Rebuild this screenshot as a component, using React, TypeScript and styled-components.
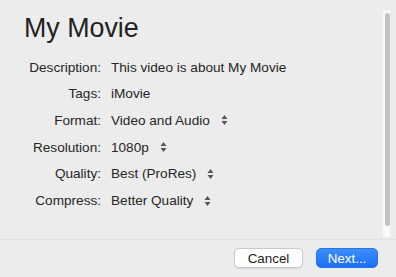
import React from "react";
import styled, { createGlobalStyle } from "styled-components";

const Global = createGlobalStyle`
  html, body { margin: 0; padding: 0; background: #ececec; }
  body { font-family: "Liberation Sans", Arial, sans-serif; -webkit-font-smoothing: antialiased; }
`;

const Window = styled.div`
  width: 396px;
  height: 277px;
  display: flex;
  flex-direction: column;
  background: #ececec;
  overflow: hidden;
`;

const Main = styled.div`
  flex: 1;
  display: flex;
  flex-direction: row;
  min-height: 0;
`;

const Content = styled.div`
  flex: 1;
  padding: 12px 0 0 24px;
`;

const Title = styled.h1`
  margin: 0 0 11px 0;
  font-size: 26.8px;
  line-height: 32px;
  font-weight: 400;
  color: #222;
`;

const Form = styled.div`
  display: grid;
  grid-template-columns: 77px auto;
  column-gap: 10px;
  font-size: 13.6px;
  color: #262626;
`;

const Label = styled.div<{ $h: number }>`
  height: ${(p) => p.$h}px;
  display: flex;
  align-items: center;
  justify-content: flex-end;
  white-space: nowrap;
`;

const Value = styled.div<{ $h: number }>`
  height: ${(p) => p.$h}px;
  display: flex;
  align-items: center;
  gap: 11px;
  white-space: nowrap;
`;

const Track = styled.div`
  width: 8px;
  margin: 10px 6px 2px 0;
  background: #f9f9f9;
  border-left: 1px solid #ededed;
  padding: 3px 0 11px 2px;
  box-sizing: border-box;
  display: flex;
`;

const Thumb = styled.div`
  flex: 1;
  background: #c2c2c2;
  border-radius: 3px;
`;

const Separator = styled.div`
  height: 1px;
  background: #e2e2e2;
`;

const Footer = styled.div`
  height: 37px;
  display: flex;
  justify-content: flex-end;
  align-items: flex-start;
  gap: 13px;
  padding: 8px 18px 0 0;
  box-sizing: border-box;
`;

const Button = styled.button<{ $primary?: boolean; $w: number }>`
  width: ${(p) => p.$w}px;
  height: 20px;
  border-radius: 5px;
  font-family: "Liberation Sans", Arial, sans-serif;
  font-size: 13.4px;
  padding: 0;
  display: flex;
  align-items: center;
  justify-content: center;
  box-sizing: border-box;
  cursor: default;
  ${(p) =>
    p.$primary
      ? `
    color: #fff;
    border: 0.5px solid #2a72e8;
    background: linear-gradient(#3d8ff9, #1b6ef5);
  `
      : `
    color: #222;
    border: 1px solid #c9c9c9;
    background: #ffffff;
    box-shadow: 0 0.5px 1px rgba(0,0,0,0.08);
  `}
`;

const Arrows = () => (
  <svg width="7" height="12" viewBox="0 0 7 12">
    <polygon points="0.5,5 3.5,1 6.5,5" fill="#555" />
    <polygon points="0.5,7 3.5,11 6.5,7" fill="#555" />
  </svg>
);

type Row = { label: string; value: string; popup?: boolean; h: number };

const rows: Row[] = [
  { label: "Description:", value: "This video is about My Movie", h: 25 },
  { label: "Tags:", value: "iMovie", h: 26 },
  { label: "Format:", value: "Video and Audio", popup: true, h: 28 },
  { label: "Resolution:", value: "1080p", popup: true, h: 26 },
  { label: "Quality:", value: "Best (ProRes)", popup: true, h: 27 },
  { label: "Compress:", value: "Better Quality", popup: true, h: 27 },
];

export default function App() {
  return (
    <>
      <Global />
      <Window>
        <Main>
          <Content>
            <Title>My Movie</Title>
            <Form>
              {rows.map((r) => (
                <React.Fragment key={r.label}>
                  <Label $h={r.h}>{r.label}</Label>
                  <Value $h={r.h}>
                    <span>{r.value}</span>
                    {r.popup && <Arrows />}
                  </Value>
                </React.Fragment>
              ))}
            </Form>
          </Content>
          <Track>
            <Thumb />
          </Track>
        </Main>
        <Separator />
        <Footer>
          <Button $w={69}>Cancel</Button>
          <Button $w={62} $primary>
            Next...
          </Button>
        </Footer>
      </Window>
    </>
  );
}
